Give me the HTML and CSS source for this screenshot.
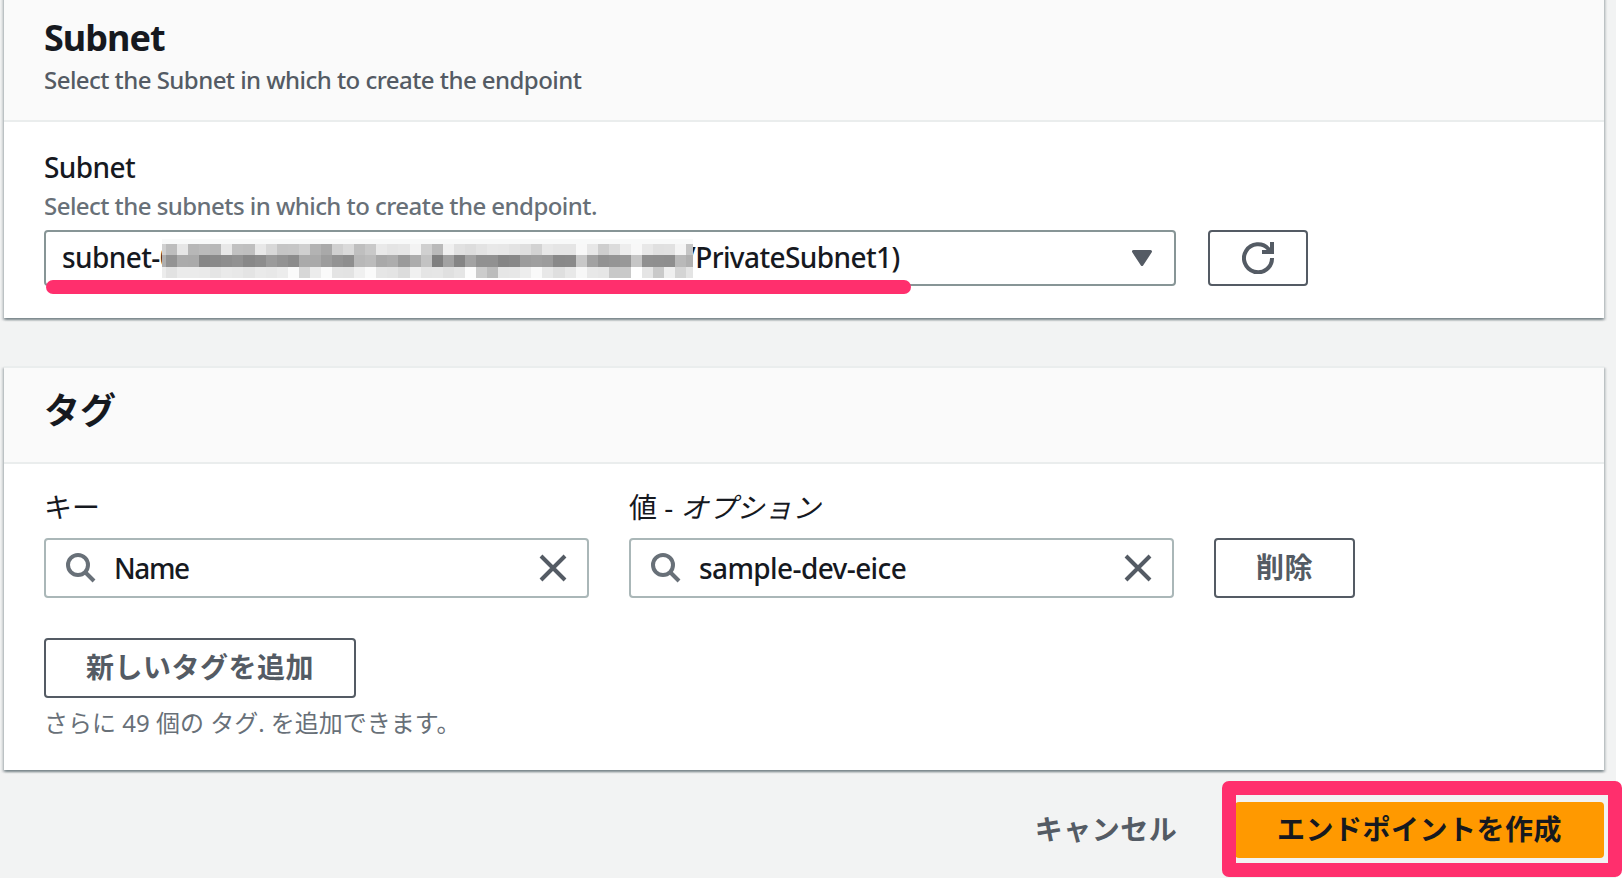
FILE: index.html
```html
<!DOCTYPE html>
<html lang="ja">
<head>
    <meta charset="UTF-8">
    <meta name="viewport" content="width=device-width, initial-scale=1.0">
    <title>エンドポイントを作成</title>
    <link rel="stylesheet" href="styles.css">
</head>
<body>

    <div class="page">
        <section class="card subnet-card">
            <div class="card-header subnet-header">
                <h2><span class="t-title">Subnet</span></h2>
                <p class="description"><span class="t-desc">Select the Subnet in which to create the endpoint</span></p>
            </div>
            <div class="card-body">
                <div class="label"><span class="t-label">Subnet</span></div>
                <div class="hint"><span class="t-hint">Select the subnets in which to create the endpoint.</span></div>
                <div class="select-row">
                    <div class="select">
                        <span class="select-start">subnet-0</span>
                        <svg id="mosaic" class="mosaic" width="531" height="39" viewBox="0 0 531 39" shape-rendering="crispEdges"></svg>
                        <span class="select-end">/PrivateSubnet1)</span>
                        <svg class="caret" width="20" height="16" viewBox="0 0 20 16"><path d="M1.5 1.5h17L10 14.5z" fill="#545b64" stroke="#545b64" stroke-width="3" stroke-linejoin="round"/></svg>
                        <div class="underline"></div>
                    </div>
                    <button class="btn refresh-btn" aria-label="Refresh">
                        <svg width="32" height="32" viewBox="0 0 32 32" fill="none" stroke="#545b64" stroke-width="4"><path d="M30 16A14 14 0 1 1 26.500 7L29 10"/><path d="M30 0v10H20"/></svg>
                    </button>
                </div>
            </div>
        </section>

        <section class="card tag-card">
            <div class="card-header tag-header">
                <h2>タグ</h2>
            </div>
            <div class="card-body">
                <div class="tag-row">
                    <div class="field">
                        <div class="label">キー</div>
                        <div class="input">
                            <svg class="search" width="30" height="30" viewBox="0 0 30 30" fill="none" stroke="#687078" stroke-width="4"><circle cx="12" cy="12" r="10"/><path d="M19 19l9 9"/></svg>
                            <span class="value t-name">Name</span>
                            <svg class="clear" width="28" height="28" viewBox="0 0 28 28" fill="none" stroke="#545b64" stroke-width="4"><path d="M2 2l24 24M26 2L2 26"/></svg>
                        </div>
                    </div>
                    <div class="field">
                        <div class="label">値 - <i>オプション</i></div>
                        <div class="input">
                            <svg class="search" width="30" height="30" viewBox="0 0 30 30" fill="none" stroke="#687078" stroke-width="4"><circle cx="12" cy="12" r="10"/><path d="M19 19l9 9"/></svg>
                            <span class="value t-value">sample-dev-eice</span>
                            <svg class="clear" width="28" height="28" viewBox="0 0 28 28" fill="none" stroke="#545b64" stroke-width="4"><path d="M2 2l24 24M26 2L2 26"/></svg>
                        </div>
                    </div>
                    <button class="btn delete-btn">削除</button>
                </div>
                <button class="btn add-btn">新しいタグを追加</button>
                <div class="hint limit">さらに 49 個の タグ. を追加できます。</div>
            </div>
        </section>

        <div class="actions">
            <button class="btn cancel-btn">キャンセル</button>
            <button class="btn primary-btn">エンドポイントを作成</button>
        </div>
        <div class="highlight"></div>
    </div>

    <script>
        // grey levels of the masked subnet id, one row per string, two hex digits per cell
        const rows = [
            "d0bde6b7bbb8e8c1bfe8d8c5c6cfb3a9d0dabfc9e9e4e6f3d0baf0e1dde3e8e7e3dfd3e8e5e5f8e7cedcedf8e8e0e1f4c5",
            "af93abaa878a8e92888d9b938caaaa9d938eb8bca9ad9aacc380a285a3919185889c9f9c898ac8a2929598c6908f8eb9b0",
            "ece2ebebeae5eae8e4eae8ecfad7ecfae4e3f0fae6e4dcf0e5e6e0e5fcccbce6e7edf9e8dfe8f7e8e6c8c9ffe5c9efd4e4"
        ];
        const tops = [5, 16, 28, 39];
        let cells = '<rect width="531" height="5" fill="#f8f9f9"/>';

        rows.forEach((row, r) => {
            for (let i = 0; i < row.length / 2; i++) {
                const level = row.substr(i * 2, 2);
                const left = i === 0 ? 0 : Math.round(4 + (i - 1) * 11.07);
                const right = Math.round(4 + i * 11.07);
                cells += `<rect x="${left}" y="${tops[r]}" width="${right - left}" height="${tops[r + 1] - tops[r]}" fill="#${level + level + level}"/>`;
            }
        });
        document.getElementById("mosaic").innerHTML = cells;
    </script>
</body>
</html>
```
FILE: styles.css
```css
/* General Styles */
* {
    box-sizing: border-box;
}

body {
    margin: 0;
    background-color: #fff;
    color: #16191f;
    font-family: "Noto Sans", "Noto Sans CJK JP", sans-serif;
    font-size: 28px;
    overflow: hidden;
}

.page {
    display: flow-root;
    position: relative;
    width: 1616px;
    height: 878px;
    padding: 0 12px 0 4px;
    background-color: #f2f3f3;
}

.card {
    background-color: #fff;
    box-shadow: 0 2px 2px 0 rgba(0, 28, 36, 0.3), 2px 2px 2px 0 rgba(0, 28, 36, 0.15), -2px 2px 2px 0 rgba(0, 28, 36, 0.15);
}

/* The top edge of the first card is scrolled out of view */
.subnet-card {
    height: 324px;
    margin-top: -6px;
}

.tag-card {
    height: 404px;
    margin-top: 48px;
    border-top: 2px solid #eaeded;
}

.card-header {
    padding: 0 40px;
    background-color: #fafafa;
    border-bottom: 2px solid #eaeded;
}

.subnet-header {
    height: 128px;
    padding-top: 22px;
}

.tag-header {
    height: 96px;
    padding-top: 21px;
}

.card-body {
    padding: 0 40px;
}

h2 {
    margin: 0;
    font-size: 36px;
    line-height: 44px;
    font-weight: 700;
}

.description {
    margin: 0;
    font-size: 24px;
    line-height: 40px;
    color: #545b64;
}

.label {
    line-height: 42px;
    white-space: nowrap;
}

.hint {
    font-size: 24px;
    line-height: 32px;
    color: #687078;
}

.subnet-card .label {
    height: 68px;
    padding-top: 24px;
}

.subnet-card .hint {
    height: 40px;
}

/* Latin text is set a little narrower and heavier */
.t-title {
    letter-spacing: -1px;
}

.t-desc, .t-hint {
    font-weight: 500;
    letter-spacing: -0.55px;
}

.t-label, .value, .select {
    font-weight: 500;
    letter-spacing: -0.6px;
}

.t-name {
    letter-spacing: -1.4px;
}

/* Subnet select */
.select-row {
    display: flex;
    gap: 32px;
}

.select {
    position: relative;
    display: flex;
    align-items: center;
    width: 1132px;
    height: 56px;
    padding: 0 22px 0 16px;
    border: 2px solid #879596;
    border-radius: 4px;
    white-space: nowrap;
}

.select-start {
    width: 100px;
    margin-top: -2px;
}

.mosaic {
    position: relative;
    z-index: 1;
    flex: none;
}

.select-end {
    margin-top: -2px;
    margin-left: -8px;
}

.caret {
    margin-left: auto;
}

.underline {
    position: absolute;
    left: 0;
    top: 48px;
    width: 865px;
    height: 14px;
    border-radius: 7px;
    background-color: #ff2f6d;
}

/* Buttons */
.btn {
    display: flex;
    align-items: center;
    justify-content: center;
    padding: 0 0 4px;
    border: 2px solid #545b64;
    border-radius: 4px;
    background-color: #fff;
    color: #545b64;
    font-family: inherit;
    font-size: 28px;
    font-weight: 700;
    letter-spacing: 0.5px;
    white-space: nowrap;
}

.refresh-btn {
    width: 100px;
    height: 56px;
    padding: 0;
}

.delete-btn {
    width: 141px;
    height: 60px;
}

.add-btn {
    width: 312px;
    height: 60px;
    margin-top: 40px;
}

/* Tag fields */
.tag-row {
    display: flex;
    align-items: flex-end;
    gap: 40px;
    padding-top: 22px;
}

.field {
    width: 545px;
}

.field .label {
    height: 52px;
}

.input {
    display: flex;
    align-items: center;
    height: 60px;
    padding: 0 20px;
    border: 2px solid #aab7b8;
    border-radius: 4px;
}

.value {
    margin-left: 18px;
}

.clear {
    margin-left: auto;
}

.limit {
    margin-top: 9px;
}

/* Footer buttons */
.actions {
    display: flex;
    justify-content: flex-end;
    gap: 16px;
    padding-top: 32px;
}

.cancel-btn {
    width: 226px;
    height: 56px;
    border: none;
    background: none;
}

.primary-btn {
    width: 369px;
    height: 56px;
    border: none;
    background-color: #ff9900;
    color: #16191f;
}

.highlight {
    position: absolute;
    left: 1222px;
    top: 781px;
    width: 400px;
    height: 96px;
    border: 14px solid #ff2f6d;
    border-radius: 7px;
}
```
